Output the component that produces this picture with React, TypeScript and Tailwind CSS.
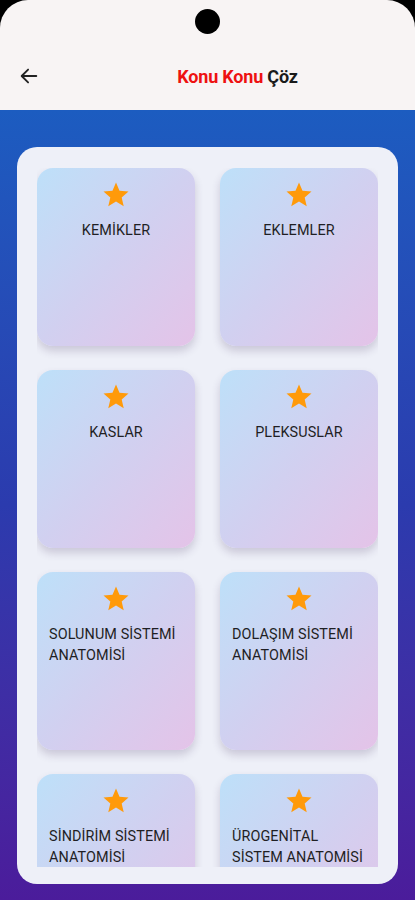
import React from "react";

const items = [
  "KEMİKLER",
  "EKLEMLER",
  "KASLAR",
  "PLEKSUSLAR",
  "SOLUNUM SİSTEMİ ANATOMİSİ",
  "DOLAŞIM SİSTEMİ ANATOMİSİ",
  "SİNDİRİM SİSTEMİ ANATOMİSİ",
  "ÜROGENİTAL SİSTEM ANATOMİSİ",
];

function Star() {
  return (
    <svg width="30" height="30" viewBox="0 0 24 24" className="shrink-0">
      <path
        fill="#ff9a0a"
        d="M12 17.27 18.18 21l-1.64-7.03L22 9.24l-7.19-.61L12 2 9.19 8.63 2 9.24l5.46 4.73L5.82 21z"
      />
    </svg>
  );
}

export default function App() {
  return (
    <div
      className="w-[415px] h-[900px] bg-black overflow-hidden flex flex-col"
      style={{ fontFamily: "Roboto, 'Noto Sans', sans-serif" }}
    >
      <div className="h-[110px] shrink-0 bg-[#f8f4f4] rounded-t-[28px] flex flex-col relative">
        <div className="absolute left-[195px] top-[9px] w-[25px] h-[25px] rounded-full bg-black" />
        <div className="mt-[58px] h-[36px] flex items-center px-[18px] relative">
          <svg width="22" height="22" viewBox="0 0 24 24" fill="none" stroke="#222" strokeWidth="2" strokeLinecap="round" strokeLinejoin="round">
            <path d="M20 12H5" />
            <path d="M11 5l-7 7 7 7" />
          </svg>
          <div className="flex-1 flex justify-center pl-[38px]">
            <span className="text-[18px] font-bold tracking-[-0.2px]">
              <span className="text-[#ee1111]">Konu Konu</span>{" "}
              <span className="text-[#1a1a1a]">Çöz</span>
            </span>
          </div>
        </div>
      </div>
      <div className="flex-1 min-h-0 bg-gradient-to-b from-[#1c5cc0] via-[#2b3bae] to-[#4b1c9b] pt-[37px] pb-[16px] px-[17px] flex flex-col">
        <div className="flex-1 min-h-0 bg-[#eef0f8] rounded-[20px] pt-[21px] pb-[17px] px-[20px] flex flex-col overflow-hidden">
          <div className="flex-1 min-h-0 overflow-hidden">
            <div className="grid grid-cols-2 gap-x-[25px] gap-y-[24px]">
              {items.map((t) => (
                <div
                  key={t}
                  className="h-[178px] rounded-[16px] bg-gradient-to-br from-[#bde0f9] via-[#d1d0f0] to-[#e4c3e8] shadow-[0_5px_9px_rgba(60,40,90,0.2)] flex flex-col items-center pt-[12px] px-[12px]"
                >
                  <Star />
                  <div className="mt-[10px] text-[14.4px] leading-[21px] text-[#1f1f24] text-left tracking-[0.1px]">
                    {t}
                  </div>
                </div>
              ))}
            </div>
          </div>
        </div>
      </div>
    </div>
  );
}
